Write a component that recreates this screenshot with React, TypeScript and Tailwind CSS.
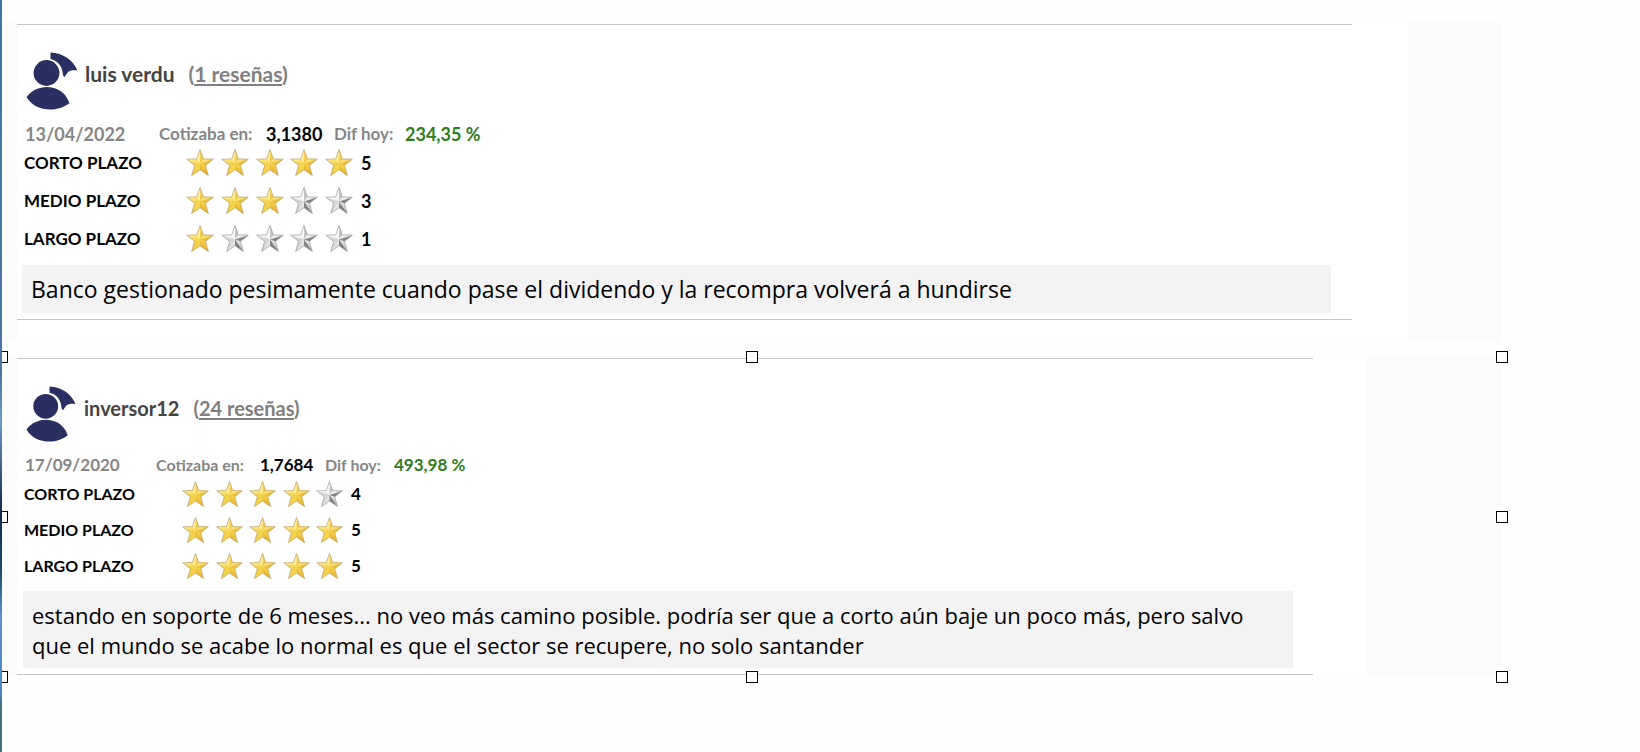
import { useId } from "react";

type Rating = { label: string; value: number };

interface Review {
    user: string;
    reviews: number;
    date: string;
    price: string;
    diff: string;
    ratings: Rating[];
    comment: string;
}

const first: Review = {
    user: "luis verdu",
    reviews: 1,
    date: "13/04/2022",
    price: "3,1380",
    diff: "234,35 %",
    ratings: [
        { label: "CORTO PLAZO", value: 5 },
        { label: "MEDIO PLAZO", value: 3 },
        { label: "LARGO PLAZO", value: 1 },
    ],
    comment: "Banco gestionado pesimamente cuando pase el dividendo y la recompra volverá a hundirse",
};

const second: Review = {
    user: "inversor12",
    reviews: 24,
    date: "17/09/2020",
    price: "1,7684",
    diff: "493,98 %",
    ratings: [
        { label: "CORTO PLAZO", value: 4 },
        { label: "MEDIO PLAZO", value: 5 },
        { label: "LARGO PLAZO", value: 5 },
    ],
    comment:
        "estando en soporte de 6 meses... no veo más camino posible. podría ser que a corto aún baje un poco más, pero salvo que el mundo se acabe lo normal es que el sector se recupere, no solo santander",
};

// the two captures are shown at slightly different zoom levels
const large = {
    card: "pt-[27px] pb-[6px]",
    body: "mr-[56px]",
    box: "mr-[21px] ml-[5px] px-[9px] py-[8px] text-[23px] leading-[32px]",
    avatar: "h-[58px] w-[52px]",
    name: "text-[21px]",
    head: "ml-[7px] gap-[8px]",
    meta: "mt-[10px] h-[28px] text-[18px] grid-cols-[134px_107px_68px_71px_auto]",
    caption: "text-[17px]",
    row: "h-[38px] grid-cols-[162px_175px_auto] text-[17px]",
    rows: "-mt-[4px] h-[121px]",
    star: "h-[28px] w-[28px]",
    value: "text-[18px]",
};

const small: typeof large = {
    card: "pt-[27px] pb-[6px]",
    body: "mr-[54px]",
    box: "mr-[20px] ml-[6px] px-[9px] pt-[9px] pb-[8px] text-[22px] leading-[30px]",
    avatar: "h-[56px] w-[50px]",
    name: "text-[20px]",
    head: "ml-[8px] gap-[8px]",
    meta: "mt-[10px] h-[26px] text-[17px] grid-cols-[131px_104px_65px_69px_auto]",
    caption: "text-[16px]",
    row: "h-[36px] grid-cols-[158px_169px_auto] text-[16px]",
    rows: "-mt-[2px] h-[115px]",
    star: "h-[27px] w-[27px]",
    value: "text-[17px]",
};

function Avatar({ className }: { className: string }) {
    return (
        <svg viewBox="0 0 52 58" className={className} aria-hidden="true">
            <g fill="#2a2f62">
                <circle cx="20.500" cy="21" r="12.900" />
                <path d="M24.500 0.500 C37 1 47 8 51.500 18.500 C47 18 44 18.500 42 20 L38.500 25 C37 24 37 23 36.500 20 C35.500 13 31 8.500 24.500 7 Z" />
                <path d="M0.500 45 C10 32 32 31 41 46 L43.500 51 C31 61 9 60 0.500 45 Z" />
            </g>
        </svg>
    );
}

const OUTLINE = "14,0.500 17.300,9.900 27.300,10.200 19.400,16.300 22.300,26.500 14,20.700 5.700,26.500 8.600,16.300 0.700,10.200 10.700,9.900";

function Star({ on, className }: { on: boolean; className: string }) {
    const id = useId();
    return (
        <svg viewBox="0 0 28 28" className={className} aria-hidden="true">
            <defs>
                <linearGradient id={id} x1="0" y1="0" x2="1" y2="1">
                    <stop offset="0.200" stopColor={on ? "#fff3a6" : "#ffffff"} />
                    <stop offset="0.500" stopColor={on ? "#f9da52" : "#eeeeee"} />
                    <stop offset="0.850" stopColor={on ? "#ecbb30" : "#c4c4c4"} />
                </linearGradient>
            </defs>
            <polygon points={OUTLINE} fill={`url(#${id})`} />
            <g fill={on ? "#d9a52a" : "#5c5c5c"} fillOpacity={on ? 0.35 : 0.7}>
                <polygon points="14,0.500 17.300,9.900 14,14.500" fillOpacity="0.300" />
                <polygon points="27.300,10.200 19.400,16.300 14,14.500" />
                <polygon points="22.300,26.500 14,20.700 14,14.500" />
                <polygon points="5.700,26.500 8.600,16.300 14,14.500" fillOpacity="0.150" />
                <polygon points="0.700,10.200 8.600,16.300 14,14.500" fillOpacity="0.200" />
            </g>
            <g fill={on ? "#fff7bd" : "#ffffff"} fillOpacity="0.500">
                <polygon points="14,0.500 10.700,9.900 14,14.500" />
                <polygon points="27.300,10.200 17.300,9.900 14,14.500" fillOpacity="0.350" />
            </g>
            <polygon points={OUTLINE} fill="none" stroke={on ? "#b99b62" : "#9a9a9a"} strokeWidth="0.700" strokeLinejoin="round" />
        </svg>
    );
}

function ReviewCard({ review, size }: { review: Review; size: typeof large }) {
    return (
        <article className={`border-y border-[#c6c6c6] ${size.card} ${size.body}`}>
            <div className="ml-[9px] flex items-start">
                <Avatar className={size.avatar} />
                <div className={`flex h-[44px] items-center font-bold ${size.name} ${size.head}`}>
                    <h2 className="mr-[6px] text-[#444444]">{review.user}</h2>
                    <a href="#" className="text-[#808080]">
                        (<span className="underline underline-offset-2">{review.reviews} reseñas</span>)
                    </a>
                </div>
            </div>

            <div className={`ml-[8px] grid items-center font-bold text-[#868686] ${size.meta}`}>
                <time>{review.date}</time>
                <span className={size.caption}>Cotizaba en:</span>
                <span className="text-black">{review.price}</span>
                <span className={size.caption}>Dif hoy:</span>
                <span className="text-[#2f7d1c]">{review.diff}</span>
            </div>

            <div className={`ml-[7px] ${size.rows}`}>
                {review.ratings.map((r) => (
                    <div key={r.label} className={`grid items-center font-bold text-black ${size.row}`}>
                        <span>{r.label}</span>
                        <span className="flex justify-between pr-[8px]">
                            {[1, 2, 3, 4, 5].map((n) => (
                                <Star key={n} on={n <= r.value} className={size.star} />
                            ))}
                        </span>
                        <span className={size.value}>{r.value}</span>
                    </div>
                ))}
            </div>

            <p className={`bg-[#f3f3f3] font-['Open_Sans',sans-serif] text-black ${size.box}`}>{review.comment}</p>
        </article>
    );
}

function Handle({ className }: { className: string }) {
    return <span className={`absolute h-[12px] w-[12px] border border-black bg-white ${className}`} />;
}

export default function App() {
    return (
        <div className="flex min-h-screen bg-[#fefefe] font-[Lato,sans-serif]">
            <div className="z-10 w-[2px] shrink-0 bg-[linear-gradient(to_bottom,#44739f_0%,#4a78a3_50%,#6b9cc6_56%,#43618a_62%,#0e2a4c_68%,#1d4c6b_76%,#5b93c8_82%,#4a86bd_92%,#3e7277_94%,#3e7277_100%)]" />

            <main className="mr-[138px] flex-1 pt-[22px]">
                <section className="flex h-[320px] bg-[#fbfbfb] pr-[94px] pl-[15px]">
                    <div className="flex-1 bg-white pt-[2px]">
                        <ReviewCard review={first} size={large} />
                    </div>
                </section>

                <section className="relative mt-[15px] flex h-[320px] bg-[#fbfbfb] pr-[135px] pl-[15px]">
                    <div className="flex-1 bg-white pt-px">
                        <ReviewCard review={second} size={small} />
                    </div>
                    <Handle className="-top-[6px] -left-[6px]" />
                    <Handle className="-top-[6px] left-1/2 -translate-x-1/2" />
                    <Handle className="-top-[6px] -right-[6px]" />
                    <Handle className="top-1/2 -left-[6px] -translate-y-1/2" />
                    <Handle className="top-1/2 -right-[6px] -translate-y-1/2" />
                    <Handle className="-bottom-[6px] -left-[6px]" />
                    <Handle className="-bottom-[6px] left-1/2 -translate-x-1/2" />
                    <Handle className="-right-[6px] -bottom-[6px]" />
                </section>
            </main>
        </div>
    );
}
